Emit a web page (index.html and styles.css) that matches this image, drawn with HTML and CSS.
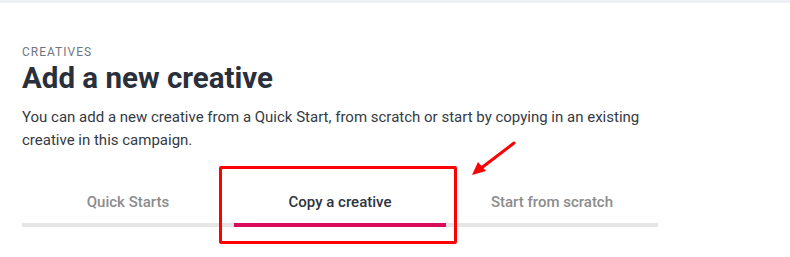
FILE: index.html
```html
<!DOCTYPE html>
<html lang="en">
<head>
<meta charset="utf-8">
<title>Add a new creative</title>
<link rel="stylesheet" href="styles.css">
</head>
<body>
<div class="topbar"></div>
<div class="page">
    <div class="eyebrow">CREATIVES</div>
    <h1 class="title">Add a new creative</h1>
    <p class="intro">You can add a new creative from a Quick Start, from scratch or start by copying in an existing creative in this campaign.</p>

    <div class="tabs">
        <div class="tab">Quick Starts</div>
        <div class="tab active">Copy a creative</div>
        <div class="tab">Start from scratch</div>
    </div>

    <!-- annotation -->
    <div class="mark"></div>
    <svg class="arrow" width="60" height="50" viewBox="0 0 60 50">
        <line x1="54" y1="3" x2="20" y2="29" stroke="#ff0000" stroke-width="3" stroke-linecap="round"/>
        <polygon points="12,35 18,22 26,31" fill="#ff0000"/>
    </svg>
</div>
</body>
</html>
```

FILE: styles.css
```css
body
{
    margin: 0;
    background: #ffffff;
    font-family: Roboto, "Liberation Sans", sans-serif;
}
.topbar
{
    height: 3px;
    background: #eff0f6;
}
.page
{
    position: relative;
    padding: 41px 22px 0 22px;
    height: 213px;
}
.eyebrow
{
    font-size: 12px;
    line-height: 16px;
    letter-spacing: 1px;
    color: #6f7682;
}
.title
{
    margin: 0;
    font-size: 29.5px;
    line-height: 37px;
    font-weight: 700;
    color: #2a303b;
}
.intro
{
    margin: 9px 0 0 0;
    width: 636px;
    font-size: 15px;
    line-height: 23px;
    color: #343a44;
}
.tabs
{
    display: flex;
    width: 636px;
    margin-top: 40px;
}
.tab
{
    flex: 1;
    text-align: center;
    font-size: 15px;
    font-weight: 500;
    line-height: 20px;
    color: #8c8c8c;
    padding-bottom: 11px;
    border-bottom: 4px solid #e6e6e6;
}
.tab.active
{
    color: #2e3440;
    border-bottom-color: #d80e5b;
}
.mark
{
    position: absolute;
    left: 219px;
    top: 163px;
    width: 232px;
    height: 72px;
    border: 3px solid #ff0000;
    border-radius: 2px;
}
.arrow
{
    position: absolute;
    left: 460px;
    top: 137px;
}
```
